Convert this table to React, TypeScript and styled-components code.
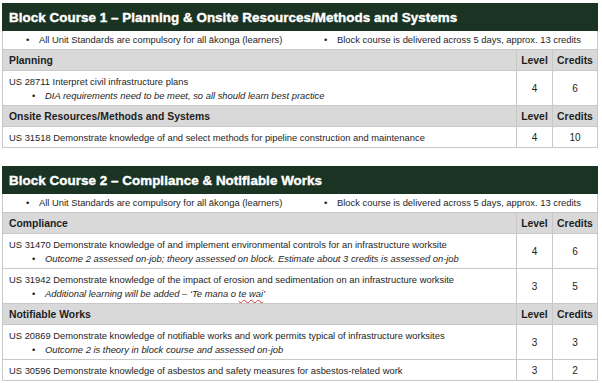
import * as React from 'react';
import styled, { createGlobalStyle } from 'styled-components';

const GlobalStyle = createGlobalStyle`
    body {
        margin: 0;
        background: #ffffff;
        font-family: "Liberation Sans", Arial, sans-serif;
        color: #1e1e1e;
    }
`;

const Page = styled.div`
    padding: 3px 4px 0 2px;
    display: flex;
    flex-direction: column;
    gap: 18px;
`;

const Table = styled.table`
    width: 596px;
    border-collapse: collapse;
    table-layout: fixed;
    font-size: 9.4px;
    border: 1px solid #c8c8c8;

    td {
        border: 1px solid #c8c8c8;
        padding: 0 6px;
    }
`;

const TitleCell = styled.td`
    && {
        background: #1b3322;
        color: #ffffff;
        font-weight: 700;
        font-size: 13.4px;
        letter-spacing: 0.05px;
        -webkit-text-stroke: 0.4px #ffffff;
        height: 26px;
        padding: 0 6px;
        border-color: #1b3322;
    }
`;

const NoteRow = styled.td`
    && {
        height: 18px;
        padding: 0;
    }
`;

const NoteGrid = styled.div`
    display: grid;
    grid-template-columns: 298px 1fr;
`;

const Bullets = styled.ul<{ $italic?: boolean }>`
    margin: 0;
    padding: 0 0 0 36px;
    list-style: none;
    font-style: ${p => (p.$italic ? 'italic' : 'normal')};

    li {
        position: relative;
        line-height: 14px;
    }

    li::before {
        content: '•';
        position: absolute;
        left: -13px;
        font-style: normal;
    }
`;

const SectionCell = styled.td<{ $center?: boolean }>`
    && {
        background: #d9d9d9;
        font-weight: 700;
        font-size: 10.4px;
        height: 20px;
        text-align: ${p => (p.$center ? 'center' : 'left')};
        padding: 0 ${p => (p.$center ? '0' : '6px')};
    }
`;

const ItemCell = styled.td<{ $tall?: boolean }>`
    && {
        height: ${p => (p.$tall ? '34px' : '20px')};
        padding: 0 6px;
        vertical-align: middle;
    }
`;

const Unit = styled.div`
    line-height: 15px;
`;

const NumCell = styled.td`
    && {
        text-align: center;
        padding: 0;
        font-size: 10px;
    }
`;

const Squiggle = styled.span`
    text-decoration: underline wavy #d23b3b;
    text-decoration-thickness: 0.5px;
    text-underline-offset: 2px;
`;

type Item = {
    code: string;
    note?: React.ReactNode;
    level: number;
    credits: number;
};

type Section = {
    name: string;
    items: Item[];
};

type Course = {
    title: string;
    sections: Section[];
};

const courses: Course[] = [
    {
        title: 'Block Course 1 \u2013 Planning & Onsite Resources/Methods and Systems',
        sections: [
            {
                name: 'Planning',
                items: [
                    {
                        code: 'US 28711 Interpret civil infrastructure plans',
                        note: 'DIA requirements need to be meet, so all should learn best practice',
                        level: 4,
                        credits: 6,
                    },
                ],
            },
            {
                name: 'Onsite Resources/Methods and Systems',
                items: [
                    {
                        code: 'US 31518 Demonstrate knowledge of and select methods for pipeline construction and maintenance',
                        level: 4,
                        credits: 10,
                    },
                ],
            },
        ],
    },
    {
        title: 'Block Course 2 \u2013 Compliance & Notifiable Works',
        sections: [
            {
                name: 'Compliance',
                items: [
                    {
                        code: 'US 31470 Demonstrate knowledge of and implement environmental controls for an infrastructure worksite',
                        note: 'Outcome 2 assessed on-job; theory assessed on block. Estimate about 3 credits is assessed on-job',
                        level: 4,
                        credits: 6,
                    },
                    {
                        code: 'US 31942 Demonstrate knowledge of the impact of erosion and sedimentation on an infrastructure worksite',
                        note: (
                            <>
                                Additional learning will be added &ndash; &lsquo;Te mana o <Squiggle>te wai</Squiggle>&rsquo;
                            </>
                        ),
                        level: 3,
                        credits: 5,
                    },
                ],
            },
            {
                name: 'Notifiable Works',
                items: [
                    {
                        code: 'US 20869 Demonstrate knowledge of notifiable works and work permits typical of infrastructure worksites',
                        note: 'Outcome 2 is theory in block course and assessed on-job',
                        level: 3,
                        credits: 3,
                    },
                    {
                        code: 'US 30596 Demonstrate knowledge of asbestos and safety measures for asbestos-related work',
                        level: 3,
                        credits: 2,
                    },
                ],
            },
        ],
    },
];

const CourseTable = ({ course }: { course: Course }) => (
    <Table>
        <colgroup>
            <col />
            <col style={{ width: 36 }} />
            <col style={{ width: 45 }} />
        </colgroup>
        <tbody>
            <tr>
                <TitleCell colSpan={3}>{course.title}</TitleCell>
            </tr>
            <tr>
                <NoteRow colSpan={3}>
                    <NoteGrid>
                        <Bullets>
                            <li>All Unit Standards are compulsory for all ākonga (learners)</li>
                        </Bullets>
                        <Bullets>
                            <li>Block course is delivered across 5 days, approx. 13 credits</li>
                        </Bullets>
                    </NoteGrid>
                </NoteRow>
            </tr>
            {course.sections.map(section => (
                <React.Fragment key={section.name}>
                    <tr>
                        <SectionCell>{section.name}</SectionCell>
                        <SectionCell $center>Level</SectionCell>
                        <SectionCell $center>Credits</SectionCell>
                    </tr>
                    {section.items.map(item => (
                        <tr key={item.code}>
                            <ItemCell $tall={!!item.note}>
                                <Unit>{item.code}</Unit>
                                {item.note && (
                                    <Bullets $italic>
                                        <li>{item.note}</li>
                                    </Bullets>
                                )}
                            </ItemCell>
                            <NumCell>{item.level}</NumCell>
                            <NumCell>{item.credits}</NumCell>
                        </tr>
                    ))}
                </React.Fragment>
            ))}
        </tbody>
    </Table>
);

export default function App() {
    return (
        <>
            <GlobalStyle />
            <Page>
                {courses.map(course => (
                    <CourseTable key={course.title} course={course} />
                ))}
            </Page>
        </>
    );
}
